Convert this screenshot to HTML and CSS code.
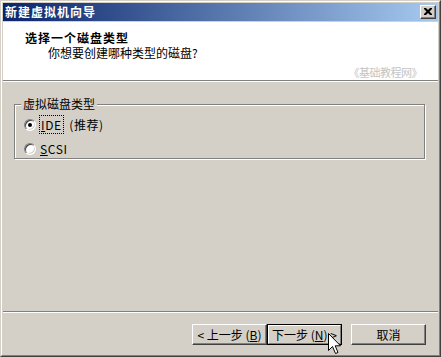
FILE: index.html
```html
<!DOCTYPE html>
<html lang="zh-CN">
<head>
<meta charset="utf-8">
<title>新建虚拟机向导</title>
<link rel="stylesheet" href="styles.css">
</head>
<body>
<div class="window">
  <div class="frame">
    <div class="titlebar">
      <span class="title-text">新建虚拟机向导</span>
      <span class="close-btn"><svg width="8" height="7" viewBox="0 0 8 7"><path d="M0 0h2l2 2 2-2h2v1l-2.5 2.5L8 6v1H6L4 5 2 7H0V6l2.5-2.5L0 1z" fill="#000"/></svg></span>
    </div>
    <div class="header">
      <div class="header-title">选择一个磁盘类型</div>
      <div class="header-sub">你想要创建哪种类型的磁盘?</div>
      <div class="watermark">《基础教程网》</div>
    </div>
    <div class="etched"></div>
    <div class="body">
      <div class="group">
        <span class="group-label">虚拟磁盘类型</span>
        <div class="radio-row">
          <span class="radio checked"></span>
          <span class="radio-text"><span class="focus"><u>I</u>DE</span>  (推荐)</span>
        </div>
        <div class="radio-row second">
          <span class="radio"></span>
          <span class="radio-text"><u>S</u>CSI</span>
        </div>
      </div>
    </div>
    <div class="etched"></div>
    <div class="buttons">
      <span class="btn">&lt; 上一步 (<u>B</u>)</span>
      <span class="btn default"><span class="btn-face">下一步 (<u>N</u>) &gt;</span></span>
      <span class="btn cancel">取消</span>
    </div>
  </div>
  <svg class="cursor" width="14" height="22" viewBox="0 0 14 22"><path d="M0.5 0.5V17.5L4.5 13.5L7.5 20.5L10 19.5L7.2 12.8H12.5Z" fill="#fff" stroke="#000" stroke-width="1" stroke-linejoin="miter"/></svg>
</div>
</body>
</html>
```
FILE: styles.css
```css
* { box-sizing: border-box; }
html, body { margin: 0; padding: 0; background: #d4d0c8; }
body {
  font-family: "Noto Sans CJK SC", "Liberation Sans", sans-serif;
  font-size: 12px;
  color: #000;
}
.window {
  position: relative;
  width: 441px;
  height: 357px;
  border: 1px solid;
  border-color: #d4d0c8 #404040 #404040 #d4d0c8;
}
.frame {
  height: 100%;
  border: 1px solid;
  border-color: #ffffff #808080 #808080 #ffffff;
  padding: 1px;
  background: #d4d0c8;
  display: flex;
  flex-direction: column;
}
.titlebar {
  height: 18px;
  flex: none;
  margin-bottom: 1px;
  background: linear-gradient(to right, #0a246a, #a6caf0);
  display: flex;
  align-items: center;
  justify-content: space-between;
  padding: 0 2px 0 2px;
}
.title-text {
  color: #fff;
  font-weight: bold;
  letter-spacing: 1px;
  line-height: 14px;
  margin-top: -1px;
}
.close-btn {
  width: 16px;
  height: 14px;
  background: #d4d0c8;
  border: 1px solid;
  border-color: #ffffff #404040 #404040 #ffffff;
  box-shadow: inset -1px -1px 0 #808080;
  display: flex;
  align-items: center;
  justify-content: center;
  padding-right: 1px;
  padding-bottom: 1px;
}
.close-btn svg { display: block; }
.header {
  height: 58px;
  flex: none;
  background: #fff;
  padding: 9px 16px 0 22px;
  display: flex;
  flex-direction: column;
}
.header-title {
  font-weight: bold;
  letter-spacing: 1px;
  line-height: 14px;
}
.header-sub {
  line-height: 14px;
  margin-top: 1px;
  padding-left: 23px;
}
.watermark {
  margin-top: 6px;
  align-self: flex-end;
  font-size: 11px;
  line-height: 12px;
  color: #c4c4c4;
  letter-spacing: -0.5px;
}
.etched {
  flex: none;
  height: 2px;
  border-top: 1px solid #808080;
  border-bottom: 1px solid #ffffff;
}
.body {
  flex: 1;
  padding: 22px 13px 0 11px;
}
.group {
  position: relative;
  border: 1px solid #808080;
  box-shadow: 1px 1px 0 #ffffff, inset 1px 1px 0 #ffffff;
  padding: 13px 0 3px 9px;
}
.group-label {
  position: absolute;
  left: 6px;
  top: -8px;
  background: #d4d0c8;
  padding: 0 2px;
  line-height: 14px;
}
.radio-row {
  display: flex;
  align-items: center;
  height: 13px;
}
.radio-row.second { margin-top: 11px; }
.radio {
  position: relative;
  width: 12px;
  height: 12px;
  border-radius: 50%;
  border: 1px solid;
  border-color: #808080 #ffffff #ffffff #808080;
  background: #fff;
  box-shadow: inset 1px 1px 0 #404040, inset -1px -1px 0 #d4d0c8;
  flex: none;
}
.radio.checked::after {
  content: "";
  position: absolute;
  left: 3px;
  top: 3px;
  width: 4px;
  height: 4px;
  border-radius: 50%;
  background: #000;
}
.radio-text {
  margin-left: 4px;
  line-height: 13px;
  white-space: pre;
  letter-spacing: 0.6px;
}
.focus {
  outline: 1px dotted #000;
  padding: 0 1px;
}
u { text-decoration: underline; text-underline-offset: 1px; }
.buttons {
  flex: none;
  height: 41px;
  display: flex;
  align-items: flex-start;
  justify-content: flex-end;
  padding: 11px 12px 0 0;
}
.btn {
  width: 75px;
  height: 21px;
  display: flex;
  align-items: center;
  justify-content: center;
  background: #d4d0c8;
  border: 1px solid;
  border-color: #ffffff #404040 #404040 #ffffff;
  box-shadow: inset -1px -1px 0 #808080;
  line-height: 14px;
  white-space: pre;
}
.btn.default {
  border: 1px solid #000;
  box-shadow: none;
  padding: 0;
}
.btn-face {
  width: 100%;
  height: 100%;
  display: flex;
  align-items: center;
  justify-content: center;
  border: 1px solid;
  border-color: #ffffff #808080 #808080 #ffffff;
}
.btn.cancel { margin-left: 9px; }
.cursor {
  position: absolute;
  left: 327px;
  top: 332px;
}
```
